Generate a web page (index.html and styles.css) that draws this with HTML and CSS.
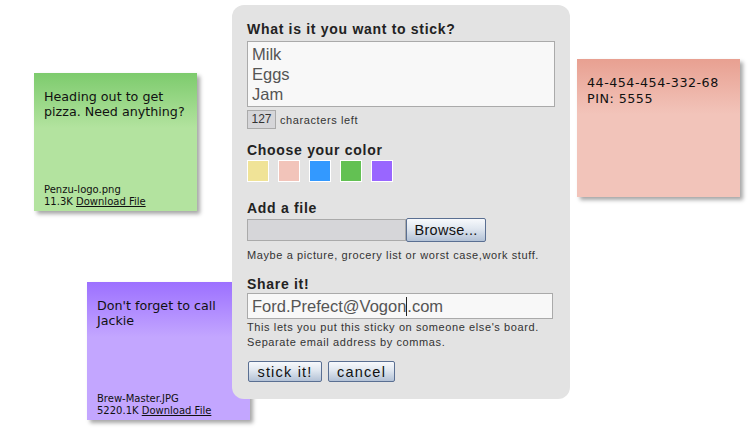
FILE: index.html
```html
<!DOCTYPE html>
<html lang="en">
<head>
  <meta charset="UTF-8" />
  <title>Sticky Board</title>
  <link rel="stylesheet" href="styles.css">
</head>
<body>
  <div class="board">
    <div class="note note-green">
      <p class="note-text">Heading out to get pizza. Need anything?</p>
      <div class="note-file">
        Penzu-logo.png<br>
        11.3K <a href="#">Download File</a>
      </div>
    </div>

    <div class="note note-pink">
      <p class="note-text">44-454-454-332-68<br>PIN: 5555</p>
    </div>

    <div class="note note-purple">
      <p class="note-text">Don't forget to call Jackie</p>
      <div class="note-file">
        Brew-Master.JPG<br>
        5220.1K <a href="#">Download File</a>
      </div>
    </div>

    <form class="panel">
      <label class="label" for="what">What is it you want to stick?</label>
      <textarea id="what" class="text-input what">Milk
Eggs
Jam</textarea>
      <div class="counter">
        <span class="count">127</span>
        <span class="hint">characters left</span>
      </div>

      <div class="label gap-top">Choose your color</div>
      <div class="swatches">
        <span class="swatch yellow"></span>
        <span class="swatch pink"></span>
        <span class="swatch blue"></span>
        <span class="swatch green"></span>
        <span class="swatch purple"></span>
      </div>

      <div class="label file-label">Add a file</div>
      <div class="file-row">
        <span class="file-box"></span>
        <button type="button" class="btn browse">Browse...</button>
      </div>
      <p class="hint help">Maybe a picture, grocery list or worst case,work stuff.</p>

      <label class="label share-label" for="share">Share it!</label>
      <div class="text-input share" id="share">Ford.Prefect@Vogon<span class="caret"></span>.com</div>
      <p class="hint help-2">This lets you put this sticky on someone else's board.<br>Separate email address by commas.</p>

      <div class="actions">
        <button type="button" class="btn stick">stick it!</button>
        <button type="button" class="btn cancel">cancel</button>
      </div>
    </form>
  </div>
</body>
</html>
```

FILE: styles.css
```css
body {
  margin: 0;
  background: #fff;
  font-family: 'Liberation Sans', Arial, sans-serif;
  color: #222;
}

.board {
  position: relative;
  width: 756px;
  height: 436px;
  overflow: hidden;
}

/* sticky notes */

.note {
  position: absolute;
  width: 163px;
  height: 138px;
  box-sizing: border-box;
  padding: 16px 3px 3px 10px;
  display: flex;
  flex-direction: column;
  justify-content: space-between;
  font-family: 'DejaVu Sans', Verdana, sans-serif;
  color: #111;
  box-shadow: 3px 3px 4px rgba(0, 0, 0, 0.35);
}

.note-text {
  margin: 0;
  font-size: 12.7px;
  line-height: 15px;
}

.note-file {
  font-size: 10px;
  line-height: 12px;
}

.note-file a {
  color: #111;
}

.note-green {
  left: 34px;
  top: 73px;
  background: linear-gradient(#7dcb6d, #b3e39f 40%, #b3e39f);
}

.note-pink {
  left: 577px;
  top: 59px;
  background: linear-gradient(#e8a091, #f2c4ba 40%, #f2c4ba);
}

.note-pink .note-text {
  line-height: 16px;
  letter-spacing: 0.5px;
}

.note-purple {
  left: 87px;
  top: 282px;
  background: linear-gradient(#9c70ff, #c3a6ff 40%, #c3a6ff);
}

/* form panel */

.panel {
  position: absolute;
  left: 232px;
  top: 5px;
  width: 338px;
  box-sizing: border-box;
  padding: 16px 15px 17px;
  background: #e3e3e3;
  border-radius: 12px;
  display: flex;
  flex-direction: column;
  align-items: flex-start;
}

.label {
  display: block;
  font-size: 14px;
  font-weight: bold;
  line-height: 16px;
  letter-spacing: 0.7px;
  color: #222;
}

.text-input {
  box-sizing: border-box;
  background: #f8f8f8;
  border: 1px solid #aaa;
  font-family: 'Liberation Sans', Arial, sans-serif;
  font-size: 16.5px;
  color: #555;
}

.what {
  width: 308px;
  height: 66px;
  margin-top: 4px;
  padding: 2px 4px;
  line-height: 20px;
  resize: none;
  overflow: hidden;
}

.counter {
  display: flex;
  align-items: center;
  gap: 4px;
  margin-top: 3px;
}

.count {
  width: 29px;
  height: 19px;
  box-sizing: border-box;
  border: 1px solid #aaa;
  background: #d6d6d9;
  font-size: 12px;
  line-height: 17px;
  text-align: center;
  color: #333;
}

.hint {
  font-size: 11px;
  letter-spacing: 0.6px;
  color: #333;
}

.gap-top {
  margin-top: 13px;
}

.swatches {
  display: flex;
  gap: 9px;
  margin-top: 2px;
}

.swatch {
  width: 22px;
  height: 22px;
  box-sizing: border-box;
  border: 1px solid #fff;
}

.yellow { background: #f0e397; }
.pink { background: #f2c4ba; }
.blue { background: #3399ff; }
.green { background: #63c153; }
.purple { background: #9966ff; }

.file-label {
  margin-top: 18px;
}

.file-row {
  display: flex;
  align-items: center;
  margin-top: 2px;
}

.file-box {
  width: 159px;
  height: 22px;
  box-sizing: border-box;
  border: 1px solid #aaa;
  background: #d6d6d9;
}

.btn {
  box-sizing: border-box;
  border: 1px solid #5a6f92;
  border-radius: 2px;
  background: linear-gradient(#f7f9fc, #dfe6ef 45%, #b3c2d6);
  font-family: 'Liberation Sans', Arial, sans-serif;
  font-size: 14.5px;
  color: #111;
  padding: 0;
  cursor: pointer;
}

.browse {
  width: 80px;
  height: 24px;
  letter-spacing: 0.3px;
}

.help {
  margin: 6px 0 0;
  line-height: 14px;
}

.share-label {
  margin-top: 14px;
}

.share {
  width: 306px;
  height: 26px;
  margin-top: 1px;
  padding: 0 4px;
  line-height: 24px;
}

.caret {
  display: inline-block;
  width: 1px;
  height: 19px;
  background: #222;
  vertical-align: -4px;
}

.help-2 {
  margin: 1px 0 0;
  line-height: 15px;
}

.actions {
  display: flex;
  gap: 6px;
  margin-top: 11px;
}

.stick,
.cancel {
  height: 21px;
  letter-spacing: 1.2px;
}

.stick {
  width: 74px;
  margin-left: 1px;
}

.cancel {
  width: 67px;
}
```
